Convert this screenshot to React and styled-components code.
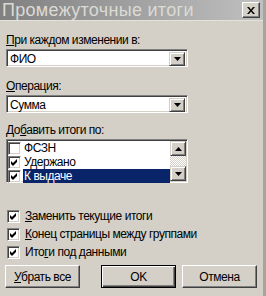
import React from "react";
import styled, { createGlobalStyle } from "styled-components";

const Global = createGlobalStyle`
  html, body { margin: 0; padding: 0; background: #d4d0c8; }
  body { font-family: "Liberation Sans", Arial, sans-serif; }
`;

const Window = styled.div`
  width: 266px;
  height: 296px;
  box-sizing: border-box;
  background: #d4d0c8;
  border-right: 3px solid #a8a49c;
  display: flex;
  flex-direction: column;
  overflow: hidden;
`;

const TitleBar = styled.div`
  height: 20px;
  flex: none;
  display: flex;
  align-items: center;
  justify-content: space-between;
  padding: 0 3px 0 2px;
  background: linear-gradient(to right, #808080, #c0c0c0);
  border-bottom: 1px solid #e4e2dc;
`;

const Title = styled.span`
  color: #dcdad4;
  font-size: 18px;
  letter-spacing: 0.3px;
  line-height: 20px;
  white-space: nowrap;
`;

const CloseButton = styled.div`
  width: 18px;
  height: 16px;
  box-sizing: border-box;
  background: #d4d0c8;
  border: 1px solid;
  border-color: #ffffff #404040 #404040 #ffffff;
  box-shadow: inset -1px -1px 0 #808080;
  display: flex;
  align-items: center;
  justify-content: center;
`;

const Body = styled.div`
  display: flex;
  flex-direction: column;
  padding: 12px 6px 0 6px;
  font-size: 12px;
  letter-spacing: -0.45px;
`;

const Label = styled.div`
  line-height: 14px;
  color: #000;
  margin-top: ${(p) => p.$top || 0}px;
  margin-bottom: 2px;
  white-space: nowrap;
`;

const Sunken = styled.div`
  box-sizing: border-box;
  width: ${(p) => p.$width}px;
  height: ${(p) => p.$height}px;
  background: #fff;
  border: 1px solid;
  border-color: #808080 #ffffff #ffffff #808080;
  box-shadow: inset 1px 1px 0 #404040, inset -1px -1px 0 #d4d0c8;
  display: flex;
  padding: 2px;
`;

const ComboText = styled.div`
  flex: 1;
  line-height: 14px;
  padding-left: 1px;
  color: #000;
`;

const ArrowButton = styled.div`
  width: 16px;
  height: ${(p) => p.$h || 14}px;
  box-sizing: border-box;
  background: #d4d0c8;
  border: 1px solid;
  border-color: #d4d0c8 #404040 #404040 #d4d0c8;
  box-shadow: inset 1px 1px 0 #ffffff, inset -1px -1px 0 #808080;
  display: flex;
  align-items: center;
  justify-content: center;
  flex: none;
`;

const Arrow = ({ up }) => (
  <svg width="7" height="4" viewBox="0 0 7 4">
    <path d={up ? "M3.5 0 L7 4 L0 4 Z" : "M0 0 L7 0 L3.5 4 Z"} fill="#000" />
  </svg>
);

const Combo = ({ value }) => (
  <Sunken $width={182} $height={18}>
    <ComboText>{value}</ComboText>
    <ArrowButton>
      <Arrow />
    </ArrowButton>
  </Sunken>
);

const ListItems = styled.div`
  flex: 1;
  display: flex;
  flex-direction: column;
  margin: -1px 0 0 -1px;
`;

const ListRow = styled.div`
  height: 14px;
  display: flex;
  align-items: center;
  line-height: 14px;
`;

const ListText = styled.span`
  flex: 1;
  height: 14px;
  margin-left: 2px;
  padding-left: 1px;
  background: ${(p) => (p.$selected ? "#0a246a" : "transparent")};
  color: ${(p) => (p.$selected ? "#fff" : "#000")};
`;

const ScrollBar = styled.div`
  width: 16px;
  flex: none;
  display: flex;
  flex-direction: column;
  justify-content: space-between;
  margin: -1px -1px -1px 0;
  background: repeating-conic-gradient(#ffffff 0 25%, #d4d0c8 0 50%) 0 0 / 2px 2px;
`;

const Box = styled.span`
  width: 13px;
  height: 13px;
  box-sizing: border-box;
  flex: none;
  background: #fff;
  border: 1px solid;
  border-color: #808080 #ffffff #ffffff #808080;
  box-shadow: inset 1px 1px 0 #404040, inset -1px -1px 0 #d4d0c8;
  display: flex;
  align-items: center;
  justify-content: center;
`;

const Check = ({ checked }) => (
  <Box>
    {checked && (
      <svg width="7" height="7" viewBox="0 0 7 7">
        <path d="M0 2 L2 4 L6 0 L6 3 L2 7 L0 5 Z" fill="#000" />
      </svg>
    )}
  </Box>
);

const Options = styled.div`
  display: flex;
  flex-direction: column;
  margin-top: 24px;
  padding-left: 1px;
`;

const OptionRow = styled.div`
  height: 18px;
  display: flex;
  align-items: center;
  gap: 5px;
  white-space: nowrap;
`;

const Buttons = styled.div`
  display: flex;
  margin-top: 4px;
  margin-left: -1px;
`;

const Button = styled.div`
  width: 76px;
  height: 23px;
  box-sizing: border-box;
  margin-left: ${(p) => p.$gap || 0}px;
  background: #d4d0c8;
  border: 1px solid;
  border-color: ${(p) =>
    p.$default ? "#000" : "#ffffff #404040 #404040 #ffffff"};
  box-shadow: ${(p) =>
    p.$default
      ? "inset 1px 1px 0 #ffffff, inset -1px -1px 0 #404040, inset -2px -2px 0 #808080"
      : "inset -1px -1px 0 #808080"};
  display: flex;
  align-items: center;
  justify-content: center;
  color: #000;
`;

const listItems = [
  { label: "ФСЗН", checked: false },
  { label: "Удержано", checked: true },
  { label: "К выдаче", checked: true, selected: true },
];

export default function App() {
  return (
    <>
      <Global />
      <Window>
        <TitleBar>
          <Title>Промежуточные итоги</Title>
          <CloseButton>
            <svg width="8" height="7" viewBox="0 0 8 7">
              <path
                d="M0 0 H2 L4 2.5 L6 0 H8 L5 3.5 L8 7 H6 L4 4.5 L2 7 H0 L3 3.5 Z"
                fill="#000"
              />
            </svg>
          </CloseButton>
        </TitleBar>
        <Body>
          <Label>
            <u>П</u>ри каждом изменении в:
          </Label>
          <Combo value="ФИО" />
          <Label $top={12}>
            <u>О</u>перация:
          </Label>
          <Combo value="Сумма" />
          <Label $top={10}>
            До<u>б</u>авить итоги по:
          </Label>
          <Sunken $width={182} $height={44}>
            <ListItems>
              {listItems.map((it) => (
                <ListRow key={it.label}>
                  <Check checked={it.checked} />
                  <ListText $selected={it.selected}>{it.label}</ListText>
                </ListRow>
              ))}
            </ListItems>
            <ScrollBar>
              <ArrowButton $h={15}>
                <Arrow up />
              </ArrowButton>
              <ArrowButton $h={15}>
                <Arrow />
              </ArrowButton>
            </ScrollBar>
          </Sunken>
          <Options>
            <OptionRow>
              <Check checked />
              <span>
                <u>З</u>аменить текущие итоги
              </span>
            </OptionRow>
            <OptionRow>
              <Check checked />
              <span>
                <u>К</u>онец страницы между группами
              </span>
            </OptionRow>
            <OptionRow>
              <Check checked />
              <span>
                Ито<u>г</u>и под данными
              </span>
            </OptionRow>
          </Options>
          <Buttons>
            <Button>
              <span>
                <u>У</u>брать все
              </span>
            </Button>
            <Button $gap={21} $default>
              OK
            </Button>
            <Button $gap={6}>Отмена</Button>
          </Buttons>
        </Body>
      </Window>
    </>
  );
}
